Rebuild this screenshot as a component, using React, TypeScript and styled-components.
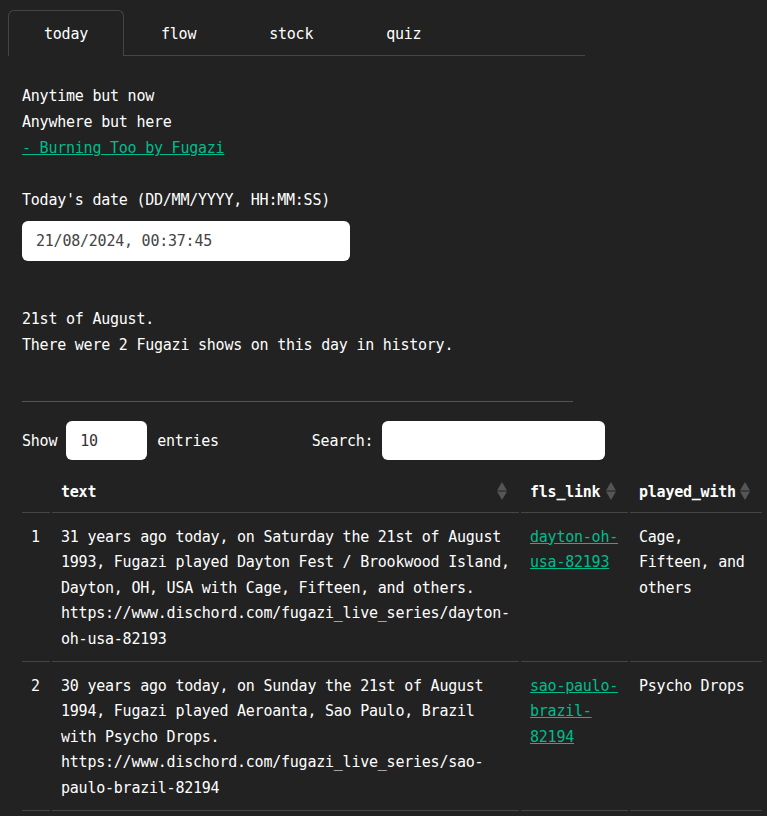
import React from "react";
import styled, { createGlobalStyle } from "styled-components";

const FONT = `"DejaVu Sans Mono", "Liberation Mono", monospace`;

const Global = createGlobalStyle`
  html, body { margin: 0; padding: 0; background: #222222; }
  body {
    font-family: ${FONT};
    font-size: 15px;
    letter-spacing: -0.231px;
    color: #ffffff;
    overflow: hidden;
  }
  * { box-sizing: border-box; }
`;

const Page = styled.div`
  padding: 10px 0 0 8px;
  width: 767px;
`;

const Nav = styled.ul`
  display: flex;
  width: 577px;
  margin: 0;
  padding: 0;
  list-style: none;
  border-bottom: 1px solid #454545;
`;

const Tab = styled.li<{ $active?: boolean }>`
  height: 46px;
  margin: 0 1px -1px 0;
  padding: 0 35px;
  display: flex;
  align-items: center;
  border: 1px solid ${(p) => (p.$active ? "#454545" : "transparent")};
  border-bottom: 0;
  border-radius: 6px 6px 0 0;
  background: ${(p) => (p.$active ? "#222222" : "transparent")};
  color: #ffffff;
  line-height: 26px;
  cursor: pointer;
`;

const Content = styled.div`
  padding-left: 14px;
`;

const Para = styled.p<{ $mt?: number }>`
  margin: ${(p) => p.$mt ?? 0}px 0 0 0;
  padding-top: 1px;
  line-height: 26px;
`;

const Link = styled.a`
  color: #00bc8c;
  text-decoration: underline;
`;

const DateBox = styled.div`
  margin-top: 8px;
  width: 328px;
  height: 40px;
  padding: 0 14px;
  display: flex;
  align-items: center;
  background: #ffffff;
  border-radius: 6px;
  color: #444444;
`;

const Rule = styled.hr`
  margin: 43px 0 0 0;
  width: 551px;
  border: 0;
  border-top: 1px solid #545454;
  height: 0;
`;

const Controls = styled.div`
  margin-top: 19px;
  display: flex;
  align-items: center;
  height: 39px;
`;

const Label = styled.span`
  line-height: 26px;
  padding-top: 1px;
`;

const Field = styled.div<{ $w: number }>`
  width: ${(p) => p.$w}px;
  height: 39px;
  background: #ffffff;
  border-radius: 6px;
  padding: 0 14px;
  display: flex;
  align-items: center;
  color: #333333;
  margin: 0 10px 0 9px;
`;

const SearchGroup = styled.div`
  display: flex;
  align-items: center;
  margin-left: 93px;
`;

const Table = styled.table`
  margin: 10px 0 0 -2px;
  table-layout: fixed;
  width: 744px;
  border-collapse: separate;
  border-spacing: 2px 0;
  line-height: 25.6px;
`;

const Th = styled.th<{ $plain?: boolean }>`
  position: relative;
  text-align: left;
  font-weight: bold;
  padding: 10px ${(p) => (p.$plain ? 9 : 24)}px 6px 9px;
  border-bottom: 1px solid #454545;
  white-space: nowrap;
`;

const Td = styled.td<{ $pr?: number }>`
  vertical-align: top;
  padding: 12px ${(p) => p.$pr ?? 9}px 8px 9px;
  border-bottom: 1px solid #454545;
`;

const SortIcon = styled.svg`
  position: absolute;
  right: 12px;
  top: 12px;
  width: 10px;
  height: 18px;
`;

const Sort = () => (
  <SortIcon viewBox="0 0 10 18">
    <polygon points="5,0 10,8.4 0,8.4" fill="#555555" />
    <polygon points="0,9.6 10,9.6 5,18" fill="#555555" />
  </SortIcon>
);

const rows = [
  {
    n: 1,
    text:
      "31 years ago today, on Saturday the 21st of August 1993, Fugazi played Dayton Fest / Brookwood Island, Dayton, OH, USA with Cage, Fifteen, and others. https://www.dischord.com/fugazi_live_series/dayton-oh-usa-82193",
    link: "dayton-oh-usa-82193",
    with: "Cage, Fifteen, and others",
  },
  {
    n: 2,
    text:
      "30 years ago today, on Sunday the 21st of August 1994, Fugazi played Aeroanta, Sao Paulo, Brazil with Psycho Drops. https://www.dischord.com/fugazi_live_series/sao-paulo-brazil-82194",
    link: "sao-paulo-brazil-82194",
    with: "Psycho Drops",
  },
];

export default function App() {
  return (
    <Page>
      <Global />
      <Nav>
        <Tab $active>today</Tab>
        <Tab>flow</Tab>
        <Tab>stock</Tab>
        <Tab>quiz</Tab>
      </Nav>
      <Content>
        <Para $mt={26}>
          Anytime but now
          <br />
          Anywhere but here
          <br />
          <Link href="#">- Burning Too by Fugazi</Link>
        </Para>
        <Para $mt={25}>Today's date (DD/MM/YYYY, HH:MM:SS)</Para>
        <DateBox>21/08/2024, 00:37:45</DateBox>
        <Para $mt={44}>
          21st of August.
          <br />
          There were 2 Fugazi shows on this day in history.
        </Para>
        <Rule />
        <Controls>
          <Label>Show</Label>
          <Field $w={81}>10</Field>
          <Label>entries</Label>
          <SearchGroup>
            <Label>Search:</Label>
            <Field $w={223} />
          </SearchGroup>
        </Controls>
        <Table>
          <colgroup>
            <col style={{ width: 28 }} />
            <col style={{ width: 467 }} />
            <col style={{ width: 107 }} />
            <col style={{ width: 132 }} />
          </colgroup>
          <thead>
            <tr>
              <Th $plain></Th>
              <Th>
                text
                <Sort />
              </Th>
              <Th>
                fls_link
                <Sort />
              </Th>
              <Th>
                played_with
                <Sort />
              </Th>
            </tr>
          </thead>
          <tbody>
            {rows.map((r) => (
              <tr key={r.n}>
                <Td>{r.n}</Td>
                <Td $pr={5}>{r.text}</Td>
                <Td $pr={3}>
                  <Link href="#">{r.link}</Link>
                </Td>
                <Td>{r.with}</Td>
              </tr>
            ))}
          </tbody>
        </Table>
      </Content>
    </Page>
  );
}
